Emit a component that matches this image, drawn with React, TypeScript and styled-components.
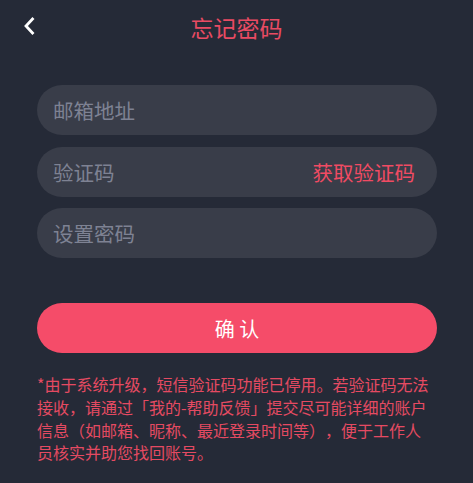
import styled, { createGlobalStyle } from 'styled-components';

const GlobalStyle = createGlobalStyle`
  html, body {
    margin: 0;
    padding: 0;
    background: #252a37;
  }
  body {
    font-family: "Noto Sans CJK SC", "Noto Sans", sans-serif;
    text-spacing-trim: space-all;
  }
`;

const Page = styled.div`
  width: 473px;
  height: 483px;
  background: #252a37;
  display: flex;
  flex-direction: column;
  box-sizing: border-box;
`;

const Header = styled.div`
  position: relative;
  height: 54px;
  display: flex;
  align-items: center;
  justify-content: center;
`;

const BackButton = styled.button`
  position: absolute;
  left: 19px;
  top: 15px;
  width: 20px;
  height: 22px;
  padding: 0;
  border: none;
  background: none;
  display: flex;
  align-items: center;
  justify-content: center;
  cursor: pointer;
`;

const Title = styled.div`
  font-size: 23px;
  color: #e94b63;
  line-height: 1;
`;

const Form = styled.div`
  display: flex;
  flex-direction: column;
  gap: 11.5px;
  padding: 31px 36px 0 37px;
`;

const Field = styled.div`
  height: 50px;
  border-radius: 25px;
  background: #393d49;
  display: flex;
  align-items: center;
  padding: 0 22px 0 16px;
`;

const Input = styled.input`
  flex: 1;
  min-width: 0;
  height: 100%;
  border: none;
  outline: none;
  background: transparent;
  padding: 0;
  font-family: "Noto Sans CJK SC", "Noto Sans", sans-serif;
  font-size: 20.5px;
  color: #e6e7ec;
  &::placeholder {
    color: #7e8293;
  }
`;

const CodeLink = styled.span`
  font-size: 20.5px;
  color: #f04b63;
  cursor: pointer;
  white-space: nowrap;
`;

const SubmitButton = styled.button`
  margin: 45px 36px 0 37px;
  height: 50px;
  border: none;
  border-radius: 25px;
  background: #f54c69;
  color: #ffffff;
  font-family: "Noto Sans CJK SC", "Noto Sans", sans-serif;
  font-size: 20px;
  cursor: pointer;
`;

const Notice = styled.p`
  margin: 20px 38px 0 37px;
  font-size: 16px;
  line-height: 22.8px;
  color: #e54a62;
  text-spacing-trim: space-all;
`;

const App = () => {
  return (
    <Page>
      <GlobalStyle />
      <Header>
        <BackButton aria-label="返回">
          <svg width="12" height="18" viewBox="0 0 12 18">
            <path
              d="M9.5 2 L3 9 L9.5 16"
              fill="none"
              stroke="#ffffff"
              strokeWidth="2.8"
              strokeLinecap="square"
              strokeLinejoin="miter"
            />
          </svg>
        </BackButton>
        <Title>忘记密码</Title>
      </Header>
      <Form>
        <Field>
          <Input placeholder="邮箱地址" />
        </Field>
        <Field>
          <Input placeholder="验证码" />
          <CodeLink>获取验证码</CodeLink>
        </Field>
        <Field>
          <Input type="password" placeholder="设置密码" />
        </Field>
      </Form>
      <SubmitButton>确 认</SubmitButton>
      <Notice>
        *由于系统升级，短信验证码功能已停用。若验证码无法接收，请通过「我的-帮助反馈」提交尽可能详细的账户信息（如邮箱、昵称、最近登录时间等），便于工作人员核实并助您找回账号。
      </Notice>
    </Page>
  );
};

export default App;
